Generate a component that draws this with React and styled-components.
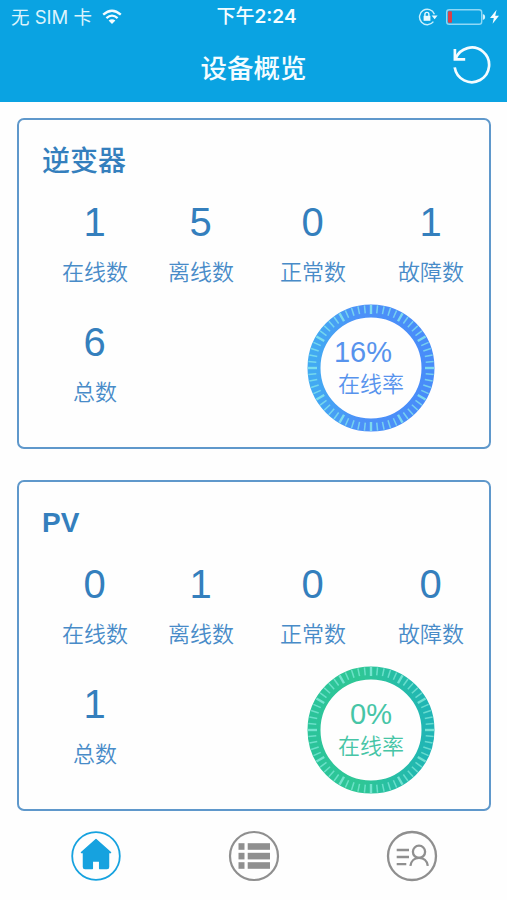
import React from "react";
import styled, { createGlobalStyle } from "styled-components";

const GlobalStyle = createGlobalStyle`
  body {
    margin: 0;
    background: #fefefe;
    font-family: "Liberation Sans", "Noto Sans CJK SC", sans-serif;
  }
`;

const Screen = styled.div`
  width: 507px;
  height: 900px;
  display: flex;
  flex-direction: column;
  overflow: hidden;
`;

const Header = styled.header`
  height: 102px;
  flex: none;
  background: #0aa3e2;
  color: #f4fcff;
`;

const StatusBar = styled.div`
  height: 34px;
  display: grid;
  grid-template-columns: 1fr auto 1fr;
  align-items: center;
  padding: 0 8px 0 11px;
  font: 18px/34px Inter, "Noto Sans CJK SC", sans-serif;
`;

const Carrier = styled.div`
  display: flex;
  align-items: center;
  gap: 10px;
  font-size: 18.5px;
  white-space: nowrap;
  color: #dcf3fc;
`;

const Clock = styled.div`
  font-weight: 600;
  font-size: 19px;
  padding-left: 3px;
  white-space: nowrap;
`;

const ClockPeriod = styled.span`
  font-weight: 500;
`;

const Indicators = styled.div`
  display: flex;
  align-items: center;
  justify-content: flex-end;
`;

const TitleBar = styled.div`
  height: 68px;
  display: grid;
  grid-template-columns: 1fr auto 1fr;
  align-items: center;
`;

const Title = styled.h1`
  grid-column: 2;
  margin: 0 0 2px;
  font: 500 26.5px/66px "Noto Sans CJK SC", sans-serif;
`;

const RefreshButton = styled.button`
  justify-self: end;
  margin: 0 15px 5px 0;
  padding: 0;
  border: 0;
  background: none;
  display: flex;
`;

const Main = styled.main`
  flex: none;
  display: flex;
  flex-direction: column;
  gap: 31px;
  padding: 16px 16px 0 17px;
`;

const Card = styled.section`
  box-sizing: border-box;
  height: 331px;
  border: 2px solid #5f98cb;
  border-radius: 7px;
  padding: 21px 0 0 23px;
  color: #347fbd;
`;

const CardTitle = styled.h2`
  margin: 0;
  font: ${(p) => (p.$latin ? "700 28px/40px" : "500 28px/41px")} "Liberation Sans", "Noto Sans CJK SC", sans-serif;
  height: 40px;
`;

const StatRow = styled.div`
  display: grid;
  grid-template-columns: 106px 106px 118px 118px;
  height: 120px;
`;

const StatBox = styled.div`
  display: flex;
  flex-direction: column;
  align-items: center;
  padding-top: 18px;
`;

const StatValue = styled.span`
  margin-right: 1px;
  font-size: 40px;
  line-height: 46px;
`;

const StatLabel = styled.span`
  margin-top: 9px;
  font: 350 22px/32px "Noto Sans CJK SC", sans-serif;
  color: #488bc8;
`;

const GaugeCell = styled.div`
  grid-column: 3 / 5;
  display: flex;
  justify-content: center;
  padding: 3px 2px 0 0;
`;

const GaugeBox = styled.div`
  display: grid;
  width: 128px;
  height: 128px;
  > * {
    grid-area: 1 / 1;
  }
`;

const GaugeText = styled.div`
  display: flex;
  flex-direction: column;
  align-items: center;
  padding-top: 32px;
  color: ${(p) => p.$color};
`;

const GaugeValue = styled.span`
  align-self: flex-end;
  margin-right: 43px;
  font-size: 29px;
  line-height: 32px;
`;

const GaugeLabel = styled.span`
  margin-top: -2px;
  font: 350 22px/32px "Noto Sans CJK SC", sans-serif;
`;

const TabBar = styled.nav`
  display: flex;
  justify-content: space-between;
  padding: 19px 69px 0 70px;
`;

const Tab = styled.button`
  padding: 0;
  border: 0;
  background: none;
  display: flex;
  color: ${(p) => (p.$active ? "#16a2df" : "#8f8f8f")};
`;

const palettes = {
  blue: { stops: ["#42aaf2", "#4d91f8", "#488cf9"], tick: "#8aecec", text: "#5793ed" },
  green: { stops: ["#2bc49a", "#2fc795", "#20b5b5"], tick: "#86ecdc", text: "#46c5a6" },
};

const TICKS = Array.from({ length: 60 }, (_, i) => i);

function Gauge({ value, label, tone }) {
  const { stops, tick, text } = palettes[tone];
  const id = `ring-${tone}`;
  return (
    <GaugeBox>
      <svg width="128" height="128" viewBox="0 0 128 128">
        <defs>
          <linearGradient id={id} x1="0" y1="0" x2="1" y2="0">
            <stop offset="0" stopColor={stops[0]} />
            <stop offset="0.4" stopColor={stops[1]} />
            <stop offset="1" stopColor={stops[2]} />
          </linearGradient>
        </defs>
        <circle cx="64" cy="64" r="57" fill="none" stroke={`url(#${id})`} strokeWidth="13" />
        {TICKS.map((i) => (
          <line
            key={i}
            x1="64"
            y1="1"
            x2="64"
            y2={i % 5 === 0 ? 10 : 9}
            stroke={tick}
            strokeWidth={i % 5 === 0 ? 2.4 : 1.5}
            opacity={i % 5 === 0 ? 0.8 : 0.7}
            transform={`rotate(${i * 6} 64 64)`}
          />
        ))}
      </svg>
      <GaugeText $color={text}>
        <GaugeValue>{value}</GaugeValue>
        <GaugeLabel>{label}</GaugeLabel>
      </GaugeText>
    </GaugeBox>
  );
}

function Stat({ value, label }) {
  return (
    <StatBox>
      <StatValue>{value}</StatValue>
      <StatLabel>{label}</StatLabel>
    </StatBox>
  );
}

function DeviceCard({ title, latin, stats, total, rate, tone }) {
  return (
    <Card>
      <CardTitle $latin={latin}>{title}</CardTitle>
      <StatRow>
        {stats.map(([label, value]) => (
          <Stat key={label} label={label} value={value} />
        ))}
      </StatRow>
      <StatRow>
        <Stat label="总数" value={total} />
        <GaugeCell>
          <Gauge value={rate} label="在线率" tone={tone} />
        </GaugeCell>
      </StatRow>
    </Card>
  );
}

const WifiIcon = () => (
  <svg width="20" height="16" viewBox="0 0 20 16" fill="none" stroke="#f4fcff" strokeWidth="2.3">
    <path d="M1.2 5.6 Q10 -2.2 18.8 5.6" />
    <path d="M4.4 9.1 Q10 4.2 15.6 9.1" />
    <path d="M10 15 L6.6 11.6 Q10 8.8 13.4 11.6 Z" fill="#f4fcff" stroke="none" />
  </svg>
);

const LockIcon = () => (
  <svg width="20" height="18" viewBox="0 0 20 18" fill="none" stroke="#c9effc" strokeWidth="1.4">
    <path d="M16.4 6.2 A7.7 7.7 0 1 0 15.4 13.6" />
    <path d="M13.6 7.6 H19.6 L16.6 11.2 Z" fill="#e8faff" stroke="none" />
    <rect x="5.6" y="7.8" width="6.8" height="5" fill="#e8faff" stroke="none" />
    <path d="M6.9 8 V6.4 A2 2 0 0 1 10.9 6.4 V8" stroke="#e8faff" />
  </svg>
);

const BatteryIcon = () => (
  <svg width="61" height="18" viewBox="-7 0 61 18">
    <rect x="1.7" y="1.7" width="35" height="14.6" rx="2.6" fill="none" stroke="#8fd8f5" strokeWidth="1.4" />
    <rect x="3" y="3.2" width="4" height="11.6" rx="1" fill="#dc4048" />
    <path d="M37.8 6 Q40.2 6.4 40.2 9 Q40.2 11.6 37.8 12 Z" fill="#d6f3fd" />
    <path d="M51.6 1.8 L45 10 H48.8 L47.6 15.8 L54 7.8 H50.2 Z" fill="#f4fcff" />
  </svg>
);

const RefreshIcon = () => (
  <svg width="40" height="40" viewBox="0 0 40 40" fill="none" stroke="#f4fcff" strokeWidth="2.7">
    <path d="M3.6 12.8 A17.3 17.3 0 1 1 2.7 21.4" />
    <path d="M2.9 3 V13.3 H13.2" />
  </svg>
);

const HomeIcon = () => (
  <svg width="52" height="52" viewBox="0 0 52 52" fill="none" stroke="currentColor">
    <circle cx="26" cy="26" r="23.8" strokeWidth="1.8" />
    <path
      d="M26 9.5 L40.6 22.6 H38.6 V37 Q38.6 38.6 37 38.6 H29.6 V31 H22.4 V38.6 H15 Q13.4 38.6 13.4 37 V22.6 H11.4 Z"
      fill="currentColor"
      strokeWidth="1.3"
      strokeLinejoin="round"
    />
  </svg>
);

const ListIcon = () => (
  <svg width="52" height="52" viewBox="0 0 52 52" fill="currentColor">
    <circle cx="26" cy="26" r="24" fill="none" stroke="currentColor" strokeWidth="2.2" />
    {[13.2, 22.8, 32.2].map((y) => (
      <g key={y}>
        <rect x="10.5" y={y} width="6" height="6.6" />
        <rect x="19.7" y={y} width="22.3" height="6.6" />
      </g>
    ))}
  </svg>
);

const ProfileIcon = () => (
  <svg width="52" height="52" viewBox="0 0 52 52" fill="none" stroke="currentColor" strokeWidth="2.3">
    <circle cx="26" cy="26" r="24" />
    <path d="M10.7 20 H23 M10.7 27 H23 M10.7 34.2 H20.3" />
    <circle cx="33" cy="21.8" r="6.1" />
    <path d="M24.4 35.9 C25 30.8 28.6 27.9 33 27.9 C37.4 27.9 41.2 30.8 41.8 35.9" />
  </svg>
);

export default function App() {
  return (
    <Screen>
      <GlobalStyle />
      <Header>
        <StatusBar>
          <Carrier>
            <span>无 SIM 卡</span>
            <WifiIcon />
          </Carrier>
          <Clock>
            <ClockPeriod>下午</ClockPeriod>2:24
          </Clock>
          <Indicators>
            <LockIcon />
            <BatteryIcon />
          </Indicators>
        </StatusBar>
        <TitleBar>
          <Title>设备概览</Title>
          <RefreshButton aria-label="刷新">
            <RefreshIcon />
          </RefreshButton>
        </TitleBar>
      </Header>
      <Main>
        <DeviceCard
          title="逆变器"
          stats={[["在线数", 1], ["离线数", 5], ["正常数", 0], ["故障数", 1]]}
          total={6}
          rate="16%"
          tone="blue"
        />
        <DeviceCard
          title="PV"
          latin
          stats={[["在线数", 0], ["离线数", 1], ["正常数", 0], ["故障数", 0]]}
          total={1}
          rate="0%"
          tone="green"
        />
      </Main>
      <TabBar>
        <Tab $active aria-label="首页">
          <HomeIcon />
        </Tab>
        <Tab aria-label="列表">
          <ListIcon />
        </Tab>
        <Tab aria-label="我的">
          <ProfileIcon />
        </Tab>
      </TabBar>
    </Screen>
  );
}
